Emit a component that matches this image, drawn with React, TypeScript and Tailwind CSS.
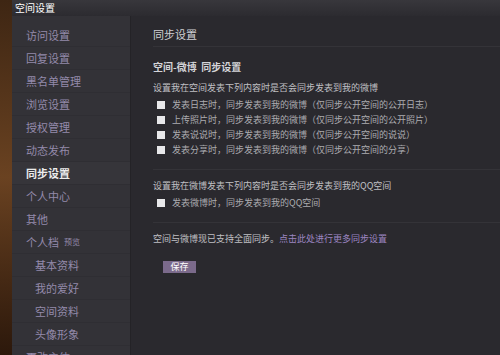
import React from "react";

const font = { fontFamily: '"Noto Sans CJK SC", "Noto Sans", sans-serif' };

interface NavItem {
  label: string;
  sub?: boolean;
  active?: boolean;
  extra?: string;
}

const nav: NavItem[] = [
  { label: "访问设置" },
  { label: "回复设置" },
  { label: "黑名单管理" },
  { label: "浏览设置" },
  { label: "授权管理" },
  { label: "动态发布" },
  { label: "同步设置", active: true },
  { label: "个人中心" },
  { label: "其他" },
  { label: "个人档", extra: "预览" },
  { label: "基本资料", sub: true },
  { label: "我的爱好", sub: true },
  { label: "空间资料", sub: true },
  { label: "头像形象", sub: true },
  { label: "更改主体" },
];

const blogOptions = [
  "发表日志时，同步发表到我的微博（仅同步公开空间的公开日志）",
  "上传照片时，同步发表到我的微博（仅同步公开空间的公开照片）",
  "发表说说时，同步发表到我的微博（仅同步公开空间的说说）",
  "发表分享时，同步发表到我的微博（仅同步公开空间的分享）",
];

function Box() {
  return <span className="w-[8px] h-[8px] bg-[#e8e8ea] shrink-0 ml-[4px]" />;
}

export default function App() {
  return (
    <div className="w-[500px] h-[355px] flex overflow-hidden bg-[#2a292e]" style={font}>
      <div className="w-[12px] h-full shrink-0 bg-gradient-to-b from-[#3e2613] via-[#6a4221] to-[#2c180b]" />
      <div className="flex-1 flex flex-col min-w-0">
        <div className="h-[16px] shrink-0 bg-gradient-to-b from-[#38373c] to-[#2c2b30] flex items-center pl-[3px] text-[10px] leading-none text-white">
          空间设置
        </div>
        <div className="flex flex-1 min-h-0">
          <div className="w-[119px] shrink-0 bg-[#333237] border-r border-[#242327] pt-[8px]">
            {nav.map((n) => (
              <div
                key={n.label}
                className={`h-[23px] flex items-center border-b border-[#2f2e33] text-[11px] leading-none ${
                  n.sub ? "pl-[23px]" : "pl-[14px]"
                } ${n.active ? "text-[#ececec] font-bold bg-[#36353a]" : "text-[#948aab]"}`}
              >
                {n.label}
                {n.extra && <span className="ml-[5px] text-[8px] text-[#948aab]">{n.extra}</span>}
              </div>
            ))}
          </div>
          <div className="flex-1 pl-[22px] text-[#c0c0c4]">
            <div className="pt-[12px] pb-[5px] border-b border-[#343338]">
              <div className="h-[13px] leading-[13px] text-[11px] text-[#d0d0d4]">同步设置</div>
            </div>
            <div className="pb-[12px] border-b border-[#343338]">
              <div className="mt-[14px] h-[12px] leading-[12px] text-[10px] font-bold text-[#d4d4d8]">
                空间-微博&nbsp;&nbsp;同步设置
              </div>
              <div className="mt-[9px] h-[12px] leading-[12px] text-[9px]">
                设置我在空间发表下列内容时是否会同步发表到我的微博
              </div>
              <div className="mt-[3px]">
                {blogOptions.map((o) => (
                  <div key={o} className="h-[15px] flex items-center gap-[7px] text-[9px] text-[#acacb0]">
                    <Box />
                    <span>{o}</span>
                  </div>
                ))}
              </div>
            </div>
            <div className="pb-[12px] border-b border-[#343338]">
              <div className="mt-[10px] h-[12px] leading-[12px] text-[9px]">
                设置我在微博发表下列内容时是否会同步发表到我的QQ空间
              </div>
              <div className="mt-[3px] h-[15px] flex items-center gap-[7px] text-[9px] text-[#acacb0]">
                <Box />
                <span>发表微博时，同步发表到我的QQ空间</span>
              </div>
            </div>
            <div className="mt-[10px] h-[12px] leading-[12px] text-[9px]">
              空间与微博现已支持全面同步。<span className="text-[#9d86c2]">点击此处进行更多同步设置</span>
            </div>
            <button className="mt-[16px] ml-[10px] w-[33px] h-[12px] bg-[#7b6a8b] text-[9px] leading-[12px] text-white flex items-center justify-center">
              保存
            </button>
          </div>
        </div>
      </div>
    </div>
  );
}
